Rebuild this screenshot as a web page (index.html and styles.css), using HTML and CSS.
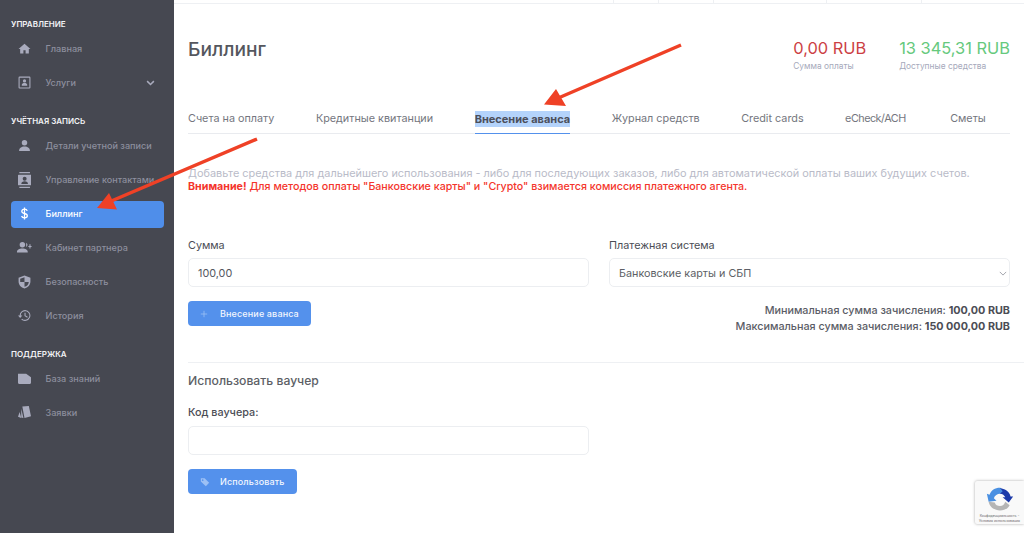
FILE: index.html
```html
<!DOCTYPE html>
<html lang="ru">
<head>
<meta charset="utf-8">
<title>Биллинг</title>
<link rel="stylesheet" href="styles.css">
</head>
<body>
<div class="app">
  <aside class="sidebar">
    <div class="nav-head first">УПРАВЛЕНИЕ</div>
    <a class="nav-item"><svg class="ico" viewBox="0 0 24 24"><path d="M12 3 1 13h3v8h6v-6h4v6h6v-8h3z"/></svg><span>Главная</span></a>
    <a class="nav-item"><svg class="ico" viewBox="0 0 24 24"><path fill-rule="evenodd" d="M3 1h18a2 2 0 0 1 2 2v18a2 2 0 0 1-2 2H3a2 2 0 0 1-2-2V3a2 2 0 0 1 2-2zm0 2v18h18V3zm9 3a3 3 0 1 1 0 6 3 3 0 0 1 0-6zm-5 10c0-2 2.500-3 5-3s5 1 5 3v2H7z"/></svg><span>Услуги</span><svg class="chev" viewBox="0 0 12 8"><path d="M1.500 1.500 6 6l4.500-4.500"/></svg></a>
    <div class="nav-head">УЧЁТНАЯ ЗАПИСЬ</div>
    <a class="nav-item"><svg class="ico" viewBox="0 0 24 24"><circle cx="12" cy="7" r="5"/><path d="M2 22c0-5 4-8 10-8s10 3 10 8z"/></svg><span>Детали учетной записи</span></a>
    <a class="nav-item"><svg class="ico tall" viewBox="0 0 20 24"><path fill-rule="evenodd" d="M2 0h16v2H2zm0 22h16v2H2zM1 4h18a1 1 0 0 1 1 1v14a1 1 0 0 1-1 1H1a1 1 0 0 1-1-1V5a1 1 0 0 1 1-1zm9 3a3 3 0 1 0 0 6 3 3 0 0 0 0-6zm-5 11h10c0-2.500-2-4-5-4s-5 1.500-5 4z"/></svg><span>Управление контактами</span></a>
    <a class="nav-item active"><svg class="ico" viewBox="0 0 24 24"><path class="dollar" d="M17 7c-.5-2-2.500-3-5-3-3 0-5 1.500-5 4s2 3.400 5 4 5.200 1.500 5.200 4.200c0 2.600-2.400 3.800-5.200 3.800-2.700 0-4.800-1.200-5.300-3.400M12 1v22"/></svg><span>Биллинг</span></a>
    <a class="nav-item"><svg class="ico wide" viewBox="0 0 28 24"><circle cx="11" cy="7" r="5"/><path d="M1 21c0-5 4-7 10-7s10 2 10 7zM18 3a4.500 4.500 0 0 1 0 8zM24 6h2v3h2v2h-2v3h-2v-3h-2V9h2z"/></svg><span>Кабинет партнера</span></a>
    <a class="nav-item"><svg class="ico shield" viewBox="0 0 24 26"><path fill-rule="evenodd" d="M12 1 1 5v7c0 6 4.500 11.500 11 13 6.500-1.500 11-7 11-13V5zm0 3v9H4V7zm0 9h8c-.5 4.500-3.500 8-8 9z"/></svg><span>Безопасность</span></a>
    <a class="nav-item"><svg class="ico" viewBox="0 0 24 24"><path d="M13 2a10 10 0 0 0-10 10H0l4 4.500L8 12H5a8 8 0 1 1 2.500 5.800L6 19.300A10 10 0 1 0 13 2zm-1 5v6l5 3 1-1.600-4-2.400V7z"/></svg><span>История</span></a>
    <div class="nav-head">ПОДДЕРЖКА</div>
    <a class="nav-item"><svg class="ico" viewBox="0 0 24 24"><path d="M0 3h15l9 6.500V20a2 2 0 0 1-2 2H2a2 2 0 0 1-2-2z"/></svg><span>База знаний</span></a>
    <a class="nav-item"><svg class="ico" viewBox="0 0 24 24"><path d="M8 1 20 0l4 19-12 3zM6 5l4 17-4-1zM3 11l3 11-6-2z"/></svg><span>Заявки</span></a>
  </aside>

  <main class="main">
    <div class="topbar"><i></i><i></i><i></i><i></i><i></i></div>
    <div class="content">
      <header class="page-head">
        <h1>Биллинг</h1>
        <div class="stats">
          <div class="stat"><b class="red">0,00 RUB</b><small>Сумма оплаты</small></div>
          <div class="stat"><b class="green">13 345,31 RUB</b><small>Доступные средства</small></div>
        </div>
      </header>
      <nav class="tabs">
        <a>Счета на оплату</a>
        <a>Кредитные квитанции</a>
        <a class="on"><mark>Внесение аванса</mark></a>
        <a>Журнал средств</a>
        <a>Credit cards</a>
        <a class="tight">eCheck/ACH</a>
        <a class="last">Сметы</a>
      </nav>
      <p class="intro">Добавьте средства для дальнейшего использования - либо для последующих заказов, либо для автоматической оплаты ваших будущих счетов.<br><span class="warn"><b>Внимание!</b> Для методов оплаты "Банковские карты" и "Crypto" взимается комиссия платежного агента.</span></p>
      <div class="form-grid">
        <div class="col">
          <label>Сумма</label>
          <div class="field">100,00</div>
          <div class="btn"><svg class="plus" viewBox="0 0 10 10"><path d="M5 1v8M1 5h8"/></svg><span>Внесение аванса</span></div>
        </div>
        <div class="col">
          <label>Платежная система</label>
          <div class="field select"><span>Банковские карты и СБП</span><svg class="sel-chev" viewBox="0 0 10 6"><path d="M1 1l4 4 4-4"/></svg></div>
          <div class="limits">Минимальная сумма зачисления: <b>100,00 RUB</b><br>Максимальная сумма зачисления: <b>150 000,00 RUB</b></div>
        </div>
      </div>
    </div>
    <hr class="rule">
    <div class="content voucher">
      <h2>Использовать ваучер</h2>
      <label>Код ваучера:</label>
      <div class="field half"></div>
      <div class="btn"><svg class="tag" viewBox="0 0 24 24"><path d="M2 3h9l11 11-8 8L2 11zM6.500 5.500a2 2 0 1 0 0 4 2 2 0 0 0 0-4z" fill-rule="evenodd"/></svg><span>Использовать</span></div>
    </div>
  </main>
</div>

<svg class="arrows" viewBox="0 0 1024 533">
  <path d="M681 45 556 99M257 139 109 202" class="shaft"/>
  <path d="M544 104.500 556 89 566 106zM97 208 109 193 117 209.500z" class="head"/>
</svg>

<div class="recaptcha">
  <svg viewBox="0 0 32 32"><path fill="#1c3aa9" d="M16 3l2 1c5 1 9 4 10 9h3l-5 7-7-6h3c-1-2-3-4-6-4z"/><path fill="#4a90e2" d="M16 3C10 3 6 6 4 11l-3-1 2 9 9-1-3-3c1-3 4-5 7-5l3-3z"/><path fill="#b5b5b5" d="M3 19c1 6 7 10 13 10 5 0 9-2 11-6l-5-4c-1 3-3 5-6 5-3 0-5-1-6-4z"/></svg>
  <small>Конфиденциальность -<br>Условия использования</small>
</div>
</body>
</html>
```

FILE: styles.css
```css
* { box-sizing: border-box; }
html, body { margin: 0; height: 533px; overflow: hidden; background: #fff; }
body { font-family: Inter, "Noto Sans", sans-serif; color: #4b4d55; font-size: 11px; }
.app { display: flex; height: 533px; }

.sidebar { width: 174px; flex: none; background: #464851; padding: 0 10.5px; }
.nav-head { font-size: 8px; font-weight: 600; color: #f2f2f5; padding-left: 0.5px; height: 12px; line-height: 12px; margin: 18px 0 6px; }
.nav-item { display: flex; align-items: center; height: 27px; margin-bottom: 7px; border-radius: 4px; color: #8d8f9e; font-size: 9.100px; font-weight: 500; padding: 0 0 2px 7px; }
.nav-item span { white-space: nowrap; }
.ico { width: 13px; height: 13px; flex: none; fill: #a9abbd; margin-right: 15px; }
.ico.wide { width: 16px; margin-left: -1.500px; margin-right: 13.500px; }
.ico.tall { width: 13.300px; height: 16px; margin-right: 14.700px; }
.ico.shield { height: 14px; }
.chev { width: 9px; height: 6px; fill: none; stroke: #a9abbd; stroke-width: 2; margin-left: auto; margin-right: 9px; }
.nav-item.active { background: #4f8eea; color: #fff; }
.dollar { fill: none; stroke: #fff; stroke-width: 2.400; }

.main { flex: 1; min-width: 0; }
.topbar { height: 4px; border-bottom: 1px solid #eef0f3; display: flex; padding-left: 439px; }
.topbar i { display: block; height: 3px; border-left: 1px solid #eef0f3; }
.topbar i:nth-child(1) { width: 45px; }
.topbar i:nth-child(2) { width: 55px; }
.topbar i:nth-child(3) { width: 113px; }
.topbar i:nth-child(4) { width: 95px; }
.content { padding: 0 14px; }
.page-head { display: flex; justify-content: space-between; height: 96px; padding-top: 31px; }
h1 { margin: 2px 0 0; font-size: 19.200px; font-weight: 500; color: #55575e; line-height: 24px; }
.stats { display: flex; gap: 33px; }
.stat { display: flex; flex-direction: column; padding-top: 1px; }
.stat b { font-size: 16.400px; font-weight: 400; line-height: 24px; }
.stat small { font-size: 8.400px; color: #a6a9bb; line-height: 12px; }
.red { color: #cc3f44; }
.green { color: #66c97d; }

.tabs { display: flex; gap: 41.500px; height: 34px; border-bottom: 1px solid #e9ebef; }
.tabs a { font-size: 10.800px; color: #74767e; height: 34px; padding-top: 11px; line-height: 16px; white-space: nowrap; }
.tabs a.on { font-weight: 700; font-size: 11px; color: #4c4f5b; border-bottom: 1px solid #5491ec; }
.tabs a.tight { letter-spacing: -.5px; }
.tabs a.last { margin-left: 3px; }
mark { background: #b4d3fb; color: inherit; display: block; line-height: 16px; }

.intro { margin: 33px 0 0; font-size: 10.900px; line-height: 13px; color: #b9bbc8; }
.warn { color: #f4352c; font-weight: 500; font-size: 10.700px; }
.warn b { font-weight: 700; }

.form-grid { display: grid; grid-template-columns: 1fr 1fr; gap: 20px; margin-top: 46px; }
label { display: block; font-size: 10.800px; font-weight: 400; color: #4b4d55; line-height: 14px; margin-bottom: 5px; }
.field { height: 29px; border: 1px solid #eceef1; border-radius: 5px; font-size: 10.800px; padding: 2px 0 0 9px; color: #55575e; display: flex; justify-content: space-between; align-items: center; }
.field.half { width: 401px; }
.select { padding-right: 2px; color: #5d5f66; }
.sel-chev { width: 8px; height: 5px; fill: none; stroke: #8d8f98; stroke-width: 1; }
.btn { display: inline-flex; align-items: center; height: 25px; background: #5491ec; border-radius: 4px; margin-top: 14px; padding: 0 12px; color: #f2f6fe; font-size: 9px; font-weight: 500; letter-spacing: .14px; }
.btn svg { width: 8px; height: 8px; flex: none; margin-right: 12px; }
.plus { fill: none; stroke: #9cc0f5; stroke-width: 1; }
.btn .tag { width: 10px; height: 10px; fill: #9cc0f5; margin-right: 10px; }
.limits { text-align: right; font-size: 10.770px; font-weight: 500; line-height: 16px; margin-top: 16px; color: #5b5d66; }
.limits b { font-weight: 700; color: #4b4d55; }

.rule { border: 0; height: 1px; background: #eef0f3; margin: 27px 0 0 14px; }
h2 { font-size: 12.200px; font-weight: 500; color: #5d5f66; margin: 0; line-height: 16px; padding-top: 10px; box-sizing: content-box; }
.voucher label { margin-top: 17px; margin-bottom: 6px; font-weight: 500; }

.arrows { position: absolute; left: 0; top: 0; width: 1024px; height: 533px; pointer-events: none; }
.shaft { fill: none; stroke: #ef4126; stroke-width: 3.500; }
.head { fill: #ef4126; }

.recaptcha { position: absolute; left: 975px; top: 481px; width: 49px; height: 43px; background: #f9f9f9; box-shadow: 0 0 3px rgba(0,0,0,.35); border-radius: 2px 0 0 2px; display: flex; flex-direction: column; align-items: center; padding-top: 4px; }
.recaptcha svg { width: 28px; height: 28px; flex: none; }
.recaptcha small { font-size: 3.500px; line-height: 4.500px; color: #666; text-align: center; white-space: nowrap; margin-top: 1px; }
```
